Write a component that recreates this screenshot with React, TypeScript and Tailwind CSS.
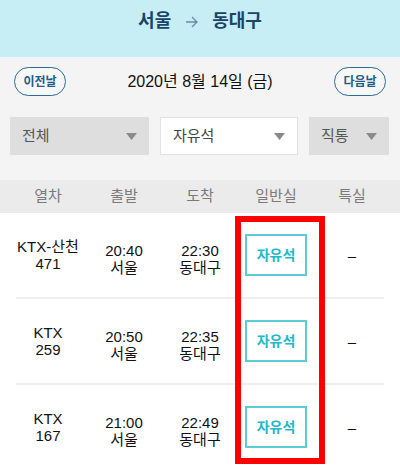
import React from 'react';

type Train = {
    name: string;
    no: string;
    dep: string;
    arr: string;
};

const trains: Train[] = [
    { name: 'KTX-산천', no: '471', dep: '20:40', arr: '22:30' },
    { name: 'KTX', no: '259', dep: '20:50', arr: '22:35' },
    { name: 'KTX', no: '167', dep: '21:00', arr: '22:49' },
];

const font = { fontFamily: '"Liberation Sans", "Noto Sans CJK KR", sans-serif' };

function Caret() {
    return (
        <svg width="11" height="7" viewBox="0 0 11 7" className="shrink-0">
            <path d="M0 0 L11 0 L5.5 7 Z" fill="#8a8a8a" />
        </svg>
    );
}

function Select({ label, white, className }: { label: string; white?: boolean; className: string }) {
    return (
        <div
            className={`${className} h-[38px] flex items-center justify-between pl-3 pr-3 text-[15px] ${
                white ? 'bg-white border border-[#e2e2e2] text-[#444]' : 'bg-[#dedede] text-[#555]'
            }`}
        >
            <span>{label}</span>
            <Caret />
        </div>
    );
}

export default function App() {
    return (
        <div className="w-[400px] h-[469px] overflow-hidden bg-white relative" style={font}>
            {/* title bar */}
            <div className="h-[57px] bg-[#c6eef4] flex items-start justify-center pt-[8px]">
                <div className="flex items-center gap-[14px] text-[18px] font-bold text-[#1b4468]">
                    <span>서울</span>
                    <svg width="13" height="12" viewBox="0 0 13 12">
                        <path d="M1 6 H12 M7 1 L12 6 L7 11" stroke="#6a8aa3" strokeWidth="1.3" fill="none" />
                    </svg>
                    <span>동대구</span>
                </div>
            </div>

            {/* date + filters */}
            <div className="bg-[#f4f4f4] h-[123px] pt-[10px]">
                <div className="flex items-center justify-between px-[14px]">
                    <button className="w-[52px] h-[29px] rounded-full border border-[#2a6b96] text-[#1f5c88] text-[12px] font-bold bg-[#f7f7f7]">
                        이전날
                    </button>
                    <div className="text-[16px] text-[#111]">2020년 8월 14일 (금)</div>
                    <button className="w-[52px] h-[29px] rounded-full border border-[#2a6b96] text-[#1f5c88] text-[12px] font-bold bg-[#f7f7f7]">
                        다음날
                    </button>
                </div>
                <div className="flex items-center gap-[11px] px-[10px] mt-[21px]">
                    <Select label="전체" className="w-[139px]" />
                    <Select label="자유석" white className="w-[138px]" />
                    <Select label="직통" className="w-[80px]" />
                </div>
            </div>

            {/* table header */}
            <div className="h-[33px] bg-[#ebebeb] grid grid-cols-5 px-[10px] items-center text-[15px] text-[#7a7a7a]">
                <div className="text-center">열차</div>
                <div className="text-center">출발</div>
                <div className="text-center">도착</div>
                <div className="text-center">일반실</div>
                <div className="text-center">특실</div>
            </div>

            {/* rows */}
            {trains.map(t => (
                <div key={t.no}>
                    <div className="h-[84px] grid grid-cols-5 px-[10px] items-center text-[15px] text-[#111] leading-[17px]">
                        <div className="text-center">
                            <div>{t.name}</div>
                            <div>{t.no}</div>
                        </div>
                        <div className="text-center pt-[8px]">
                            <div>{t.dep}</div>
                            <div>서울</div>
                        </div>
                        <div className="text-center pt-[8px]">
                            <div>{t.arr}</div>
                            <div>동대구</div>
                        </div>
                        <div className="flex justify-center">
                            <div className="w-[62px] h-[42px] border-2 border-[#5ccbd6] flex items-center justify-center text-[14px] font-semibold text-[#1fb9c9]">
                                자유석
                            </div>
                        </div>
                        <div className="text-center">–</div>
                    </div>
                    <div className="mx-[16px] h-[2px] bg-[#efefef]" />
                </div>
            ))}

            {/* annotation */}
            <div className="absolute left-[235px] top-[216px] w-[90px] h-[248px] border-[6px] border-[#ff0000] pointer-events-none" />
        </div>
    );
}
